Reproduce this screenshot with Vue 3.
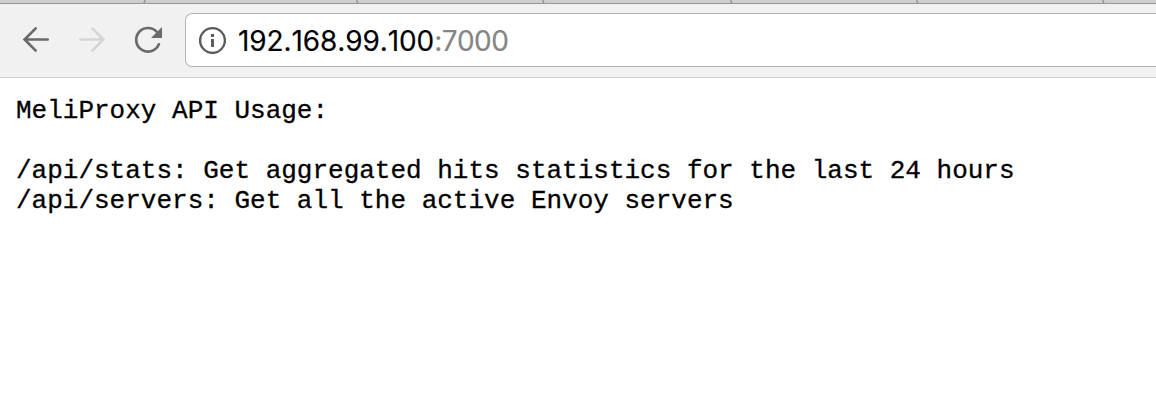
<script setup>
const tabEdges = [
  { x: 143, rising: true },
  { x: 356 },
  { x: 542 },
  { x: 730 },
  { x: 916 },
  { x: 1102 },
]
const usage = `MeliProxy API Usage:

/api/stats: Get aggregated hits statistics for the last 24 hours
/api/servers: Get all the active Envoy servers`
</script>

<template>
  <div class="browser">
    <svg class="tabs" width="1156" height="4" viewBox="0 0 1156 4">
      <rect width="1156" height="3" fill="#cecece" />
      <path
        v-for="edge in tabEdges"
        :key="edge.x"
        :d="edge.rising ? `M${edge.x + 0.7} 3L${edge.x + 2.5} 0` : `M${edge.x + 0.5} 0L${edge.x + 2} 3`"
        stroke="#8c8c8c"
        stroke-width="1.2"
      />
      <rect y="3" width="1156" height="1" fill="#959595" />
    </svg>
    <header class="toolbar">
      <nav class="controls">
        <svg width="28" height="28" viewBox="0 0 28 28" class="icon">
          <path d="M25.7 14.5H3M13.7 3.4L2.6 14.5L13.7 25.6" />
        </svg>
        <svg width="28" height="28" viewBox="0 0 28 28" class="icon disabled">
          <path d="M2.3 14.5H25M14.3 3.4L25.4 14.5L14.3 25.6" />
        </svg>
        <svg width="28" height="28" viewBox="0 0 28 28" class="icon">
          <path d="M22.6 6.7A11.8 11.8 0 1 0 24.9 19.3" />
          <path class="solid" d="M28 2V13H17Z" />
        </svg>
      </nav>
      <div class="address">
        <svg width="28" height="28" viewBox="0 0 28 28" class="info">
          <circle cx="14.5" cy="14.5" r="12.4" fill="none" stroke="#5b5b5b" stroke-width="2.4" />
          <path d="M13 8h3v3h-3zM13 13h3v8h-3z" fill="#5b5b5b" />
        </svg>
        <span class="url">192.168.99.100<span class="port">:7000</span></span>
      </div>
    </header>
    <pre class="content">{{ usage }}</pre>
  </div>
</template>

<style>
body {
  background: #fff;
}
</style>

<style scoped>
.browser {
  height: 418px;
  overflow: hidden;
  background: #fff;
}
.tabs {
  display: block;
}
.toolbar {
  display: flex;
  box-sizing: border-box;
  height: 74px;
  padding-top: 9px;
  background: #f1f1f1;
  border-bottom: 1px solid #d0d0d0;
}
.controls {
  display: flex;
  gap: 28px;
  width: 163px;
  padding: 12px 0 0 22px;
  flex: none;
}
.icon {
  flex: none;
  overflow: visible;
  fill: none;
  stroke: #6a6a6a;
  stroke-width: 2.7;
  stroke-linecap: round;
}
.icon .solid {
  fill: #6a6a6a;
  stroke: none;
}
.disabled {
  stroke: #d6d6d6;
}
.address {
  display: flex;
  align-items: center;
  box-sizing: border-box;
  flex: 1;
  height: 54px;
  padding-left: 12px;
  background: #fff;
  border: 1px solid #b4b4b4;
  border-right: 0;
  border-radius: 7px 0 0 7px;
}
.info {
  flex: none;
  margin-right: 12px;
}
.url {
  padding-top: 2px;
  color: #000;
  font: 28px/40px Inter, "Liberation Sans", sans-serif;
  font-kerning: none;
  letter-spacing: -0.1px;
  white-space: nowrap;
  -webkit-text-stroke: 0.15px currentColor;
}
.port {
  color: #858585;
  letter-spacing: -0.55px;
}
.content {
  margin: 18px 0 0 16px;
  color: #000;
  font: 26px/30px "Courier New", "Liberation Mono", monospace;
  -webkit-text-stroke: 0.3px #000;
}
</style>
